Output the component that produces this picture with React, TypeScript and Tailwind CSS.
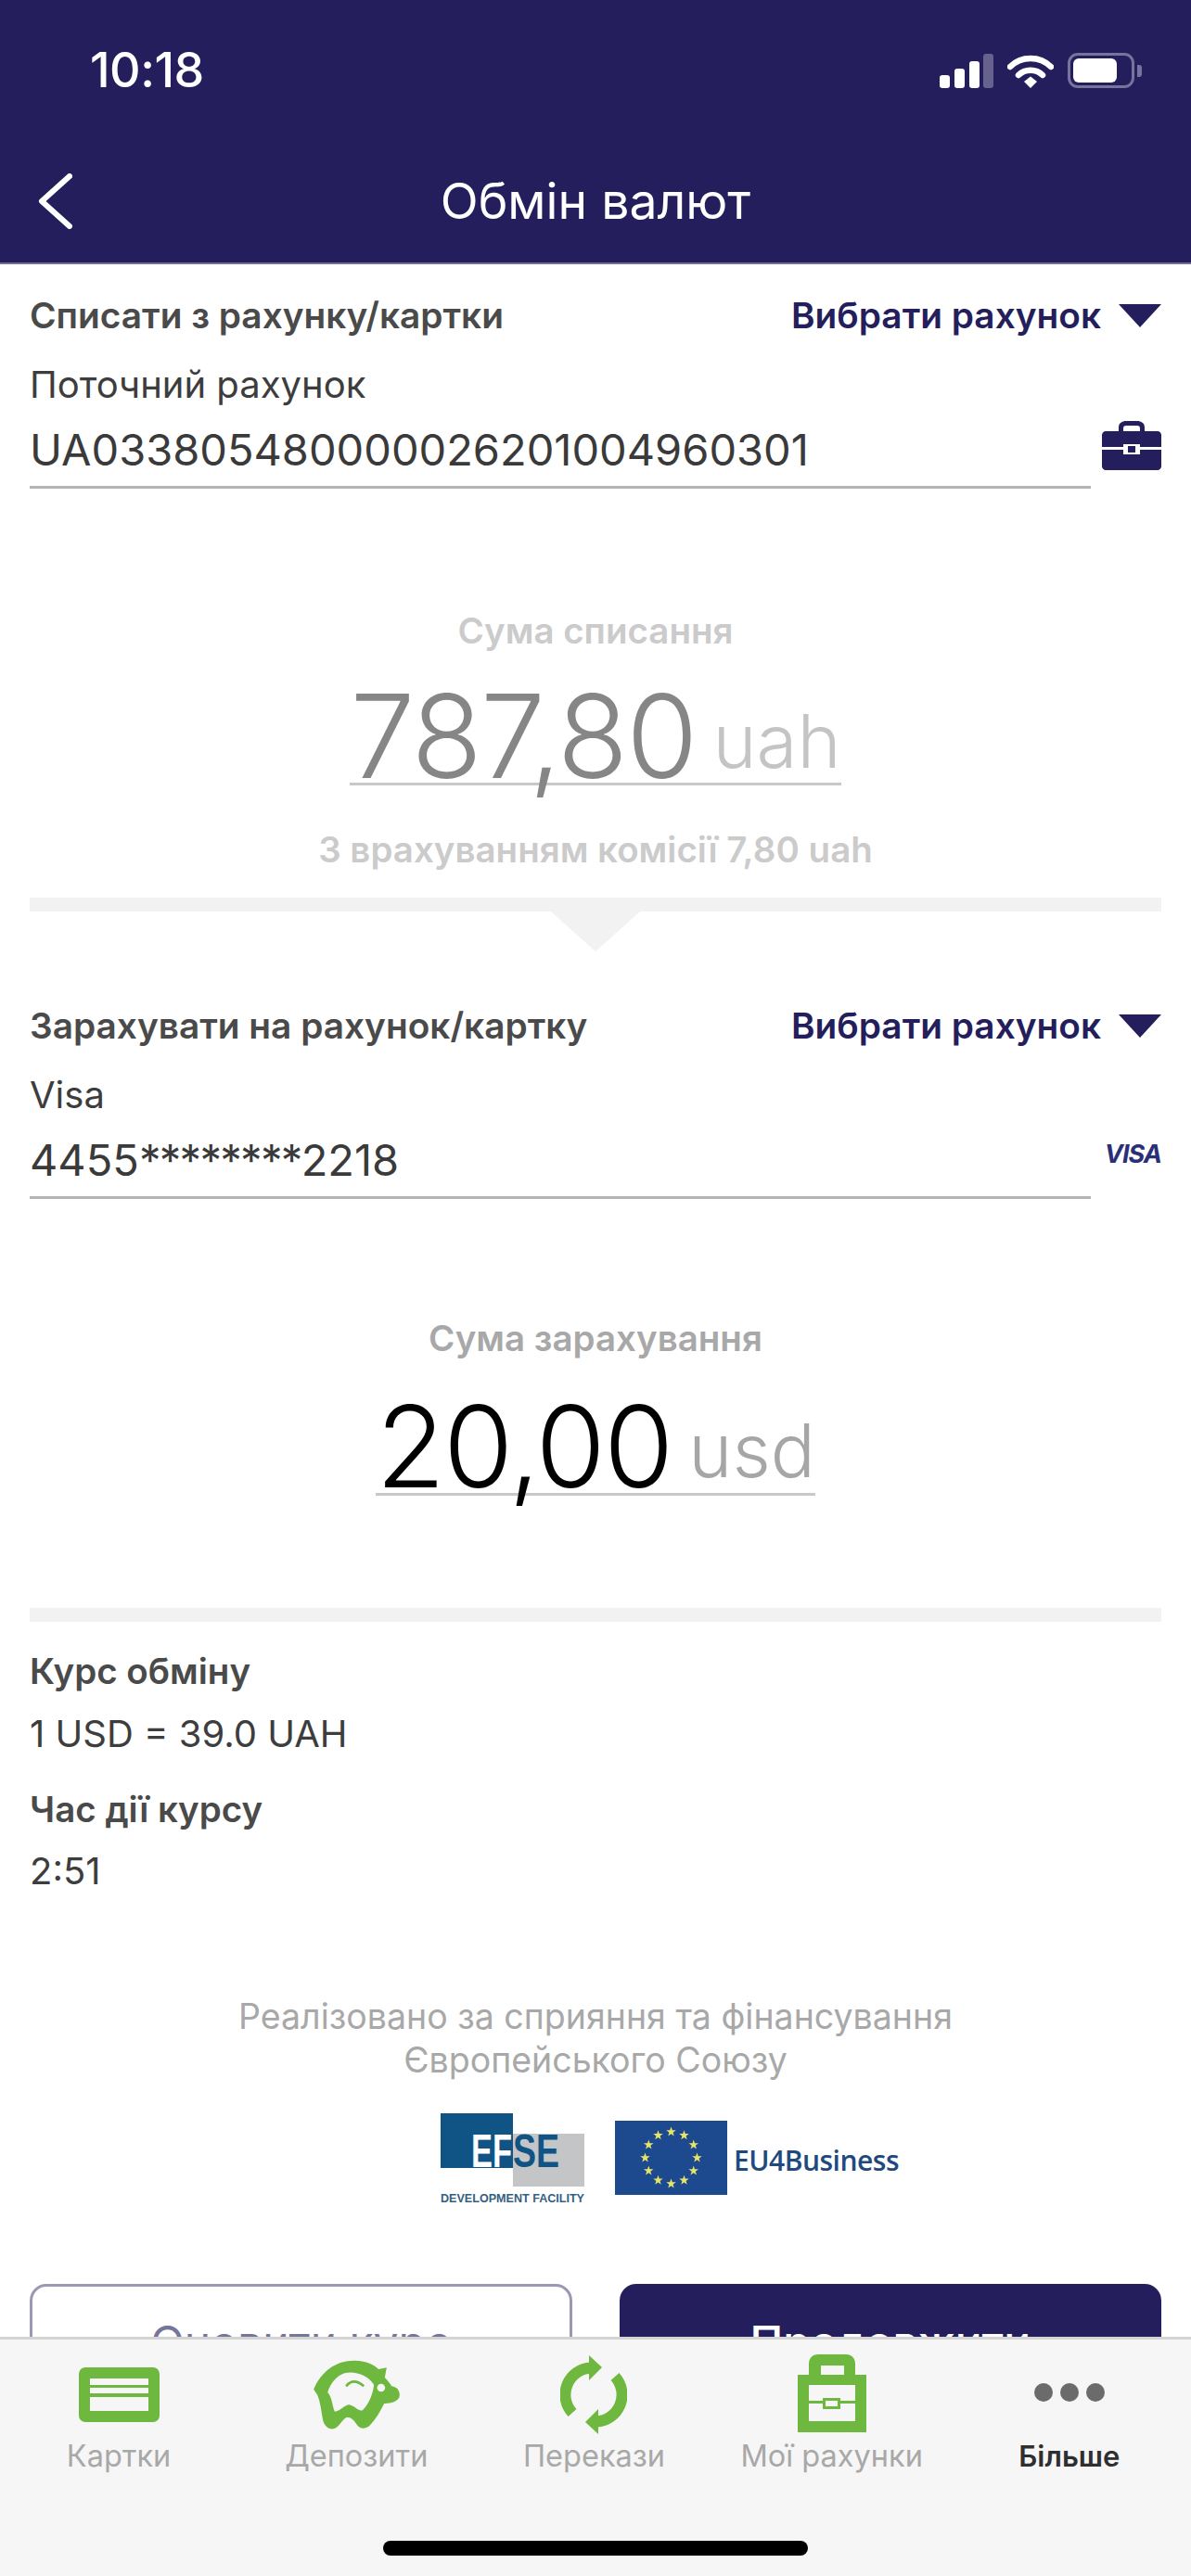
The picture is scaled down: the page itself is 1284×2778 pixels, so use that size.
import React from 'react';

const NAVY = '#241f5c';

function SignalIcon() {
  return (
    <svg width="58" height="37" viewBox="0 0 58 37" aria-hidden>
      <rect x="0" y="23" width="11" height="14" rx="3" fill="#fff" />
      <rect x="16" y="16" width="11" height="21" rx="3" fill="#fff" />
      <rect x="32" y="8" width="11" height="29" rx="3" fill="#fff" />
      <rect x="47" y="0" width="11" height="37" rx="3" fill="#fff" fillOpacity="0.3" />
    </svg>
  );
}

function WifiIcon() {
  return (
    <svg width="50" height="37" viewBox="0 0 50 37" fill="none" aria-hidden>
      <path d="M3 14 C15 2 35 2 47 14" stroke="#fff" strokeWidth="6.5" strokeLinecap="round" />
      <path d="M12 23 C19 16 31 16 38 23" stroke="#fff" strokeWidth="6.5" strokeLinecap="round" />
      <path d="M18 30 L25 24.5 L32 30 L25 37 Z" fill="#fff" />
    </svg>
  );
}

function BatteryIcon() {
  return (
    <div className="flex items-center gap-[3px]">
      <div className="w-[72px] h-[38px] rounded-[11px] border-[3px] border-[#77749c] p-[3px]">
        <div className="w-[47px] h-full rounded-[6px] bg-white" />
      </div>
      <div className="w-[5px] h-[13px] rounded-r-[3px] bg-[#77749c]" />
    </div>
  );
}

function SmallCase() {
  return (
    <svg width="64" height="53" viewBox="0 0 64 53" aria-hidden>
      <path fillRule="evenodd" d="M18 11 V7 C18 2 22 0 26 0 H38 C42 0 46 2 46 7 V11 H41 V8 C41 6 40 5 38 5 H26 C24 5 23 6 23 8 V11 Z" fill={NAVY} />
      <path d="M4 11 H60 C62 11 64 13 64 15 V28 H41 V25 H23 V28 H0 V15 C0 13 2 11 4 11 Z" fill={NAVY} />
      <path d="M0 31 H23 V36 H41 V31 H64 V49 C64 51 62 53 60 53 H4 C2 53 0 51 0 49 Z" fill={NAVY} />
      <rect x="28" y="27" width="8" height="7" fill={NAVY} />
    </svg>
  );
}

function Caret() {
  return (
    <svg width="46" height="25" viewBox="0 0 46 25" aria-hidden>
      <path d="M0 0 H46 L23 25 Z" fill={NAVY} />
    </svg>
  );
}

function SectionHead({ title }: { title: string }) {
  return (
    <div className="flex items-center justify-between h-[50px]">
      <span className="text-[38.8px] font-semibold text-[#4a4a4a]">{title}</span>
      <div className="flex items-center gap-[19px]">
        <span className="text-[38.8px] font-semibold text-[#241f5c]">Вибрати рахунок</span>
        <Caret />
      </div>
    </div>
  );
}

function AccountRow({ label, value, icon }: { label: string; value: React.ReactNode; icon: React.ReactNode }) {
  return (
    <div>
      <div className="mt-[25px] h-[50px] leading-[50px] text-[40px] text-[#3d3d3d]">{label}</div>
      <div className="flex items-start justify-between">
        <div className="w-[1144px] pt-[5px] leading-[79px] text-[47px] text-[#3a3a3a] border-b-[3px] border-[#b4b4b4]">
          {value}
        </div>
        <div className="pt-[14px]">{icon}</div>
      </div>
    </div>
  );
}

function Amount({ value, unit, valueClass, unitClass }: { value: string; unit: string; valueClass: string; unitClass: string }) {
  return (
    <div className="flex justify-center">
      <div className="flex items-baseline gap-[18px] h-[107px] leading-[107px] border-b-[3px] border-[#c8c8c8]">
        <span className={`font-[350] tracking-[-2px] ${valueClass}`}>{value}</span>
        <span className={`text-[80px] font-light -translate-y-[11px] ${unitClass}`}>{unit}</span>
      </div>
    </div>
  );
}

function CardTab() {
  return (
    <svg width="87" height="59" viewBox="0 0 87 59" aria-hidden>
      <rect width="87" height="59" rx="7" fill="#6fb83f" />
      <rect x="12" y="12" width="63" height="7" fill="#f6f6f6" />
      <rect x="12" y="22" width="63" height="6" fill="#f6f6f6" />
      <rect x="12" y="32" width="63" height="15" fill="#f6f6f6" />
    </svg>
  );
}

function PigTab() {
  return (
    <svg width="93" height="75" viewBox="900 95 278 225" aria-hidden>
      <path
        fillRule="evenodd"
        fill="#6fb83f"
        d="M900 190 C925 130 975 95 1035 97 C1070 98 1095 110 1110 125 L1136 120 L1130 152 C1140 162 1148 172 1152 180 C1170 182 1178 195 1178 208 C1178 224 1160 235 1128 236 C1115 262 1102 285 1085 303 C1072 320 1050 320 1040 305 C1032 290 1020 280 1008 280 C995 285 985 305 972 315 C955 325 935 312 930 290 C925 260 920 225 912 208 Z M945 200 C960 215 960 245 968 262 C985 262 1000 240 1015 240 C1035 245 1045 262 1058 258 C1075 240 1090 215 1095 175 C1075 145 1035 130 1000 138 C975 145 955 170 945 200 Z"
      />
      <circle cx="1118" cy="185" r="13" fill="#f6f6f6" />
      <path d="M1005 180 C1020 160 1040 160 1062 180" fill="none" stroke="#6fb83f" strokeWidth="8" />
    </svg>
  );
}

function RefreshTab() {
  return (
    <svg width="72" height="85" viewBox="0 0 72 85" aria-hidden>
      <g fill="#6fb83f">
        <path d="M13 62 A29 29 0 0 1 33 13.5" fill="none" stroke="#6fb83f" strokeWidth="12" />
        <path d="M31 0 L45 13 L31 27 Z" />
        <g transform="rotate(180 36 42.5)">
          <path d="M13 62 A29 29 0 0 1 33 13.5" fill="none" stroke="#6fb83f" strokeWidth="12" />
          <path d="M31 0 L45 13 L31 27 Z" />
        </g>
      </g>
    </svg>
  );
}

function CaseTab() {
  return (
    <svg width="74" height="84" viewBox="0 0 74 84" aria-hidden>
      <path
        fillRule="evenodd"
        fill="#6fb83f"
        d="M12 22 V10 C12 4 16 0 22 0 H52 C58 0 62 4 62 10 V22 H74 V84 H0 V22 Z M25 12 V22 H50 V12 Z M12 33 V50 H27 V47 H46 V50 H62 V33 Z M12 53 V72 H62 V53 H46 V59 H27 V53 Z M30 50 V56 H43 V50 Z"
      />
    </svg>
  );
}

const TABS = [
  { label: 'Картки', icon: <CardTab />, h: 'pt-[30px]' },
  { label: 'Депозити', icon: <PigTab />, h: 'pt-[22px]' },
  { label: 'Перекази', icon: <RefreshTab />, h: 'pt-[17px]' },
  { label: 'Мої рахунки', icon: <CaseTab />, h: 'pt-[16px]' },
];

function EfseLogo() {
  return (
    <svg width="155" height="100" viewBox="0 0 155 100" aria-hidden>
      <rect x="0" y="0" width="78" height="59" fill="#0f5485" />
      <rect x="78" y="22" width="77" height="57" fill="#c3c5c7" />
      <text x="33" y="58" fontFamily="'Liberation Sans', sans-serif" fontSize="50" fontWeight="700" fill="#fff" textLength="44" lengthAdjust="spacingAndGlyphs">
        EF
      </text>
      <text x="78" y="58" fontFamily="'Liberation Sans', sans-serif" fontSize="50" fontWeight="700" fill="#0f5485" textLength="50" lengthAdjust="spacingAndGlyphs">
        SE
      </text>
      <text x="0" y="96" fontFamily="'Liberation Sans', sans-serif" fontSize="12" fontWeight="700" fill="#355f7f" textLength="155" lengthAdjust="spacingAndGlyphs">
        DEVELOPMENT FACILITY
      </text>
    </svg>
  );
}

function EuFlag() {
  const stars = Array.from({ length: 12 }, (_, i) => {
    const a = (i * Math.PI) / 6;
    const cx = 60.5 + 28 * Math.sin(a);
    const cy = 40 - 28 * Math.cos(a);
    const pts = Array.from({ length: 10 }, (_, k) => {
      const r = k % 2 === 0 ? 5.5 : 2.2;
      const b = (k * Math.PI) / 5;
      return `${(cx + r * Math.sin(b)).toFixed(1)},${(cy - r * Math.cos(b)).toFixed(1)}`;
    }).join(' ');
    return <polygon key={i} points={pts} fill="#e8e36a" />;
  });
  return (
    <svg width="121" height="80" viewBox="0 0 121 80" aria-hidden>
      <rect width="121" height="80" fill="#1d4a8f" />
      {stars}
    </svg>
  );
}

export default function App() {
  return (
    <div className="w-[1284px] h-[2778px] flex flex-col overflow-hidden bg-white font-['Inter',sans-serif]">
      <header className="h-[285px] shrink-0 bg-[#241f5c] border-b-[2px] border-[#6f6c98] text-white">
        <div className="h-[152px] flex items-center justify-between pl-[97px] pr-[53px]">
          <span className="text-[52px] font-medium tracking-[-0.5px]">10:18</span>
          <div className="flex items-center gap-[15px]">
            <SignalIcon />
            <WifiIcon />
            <BatteryIcon />
          </div>
        </div>
        <div className="h-[130px] relative flex items-center justify-center">
          <svg className="absolute left-[40px] top-[35px]" width="38" height="60" viewBox="0 0 38 60" fill="none" aria-hidden>
            <path d="M35 3 L5 30 L35 57" stroke="#fff" strokeWidth="6" strokeLinecap="round" strokeLinejoin="round" />
          </svg>
          <span className="text-[53.5px] font-normal">Обмін валют</span>
        </div>
      </header>

      <main className="flex-1 min-h-0 overflow-hidden px-[32px]">
        <div className="pt-[30px]">
          <SectionHead title="Списати з рахунку/картки" />
          <AccountRow label="Поточний рахунок" value="UA033805480000026201004960301" icon={<SmallCase />} />
        </div>

        <div className="mt-[128px] h-[50px] leading-[50px] text-center text-[38.5px] font-semibold text-[#cbcbcb]">Сума списання</div>
        <div className="mt-[35px]">
          <Amount value="787,80" unit="uah" valueClass="text-[125px] text-[#868686]" unitClass="text-[#c4c4c4]" />
        </div>
        <div className="mt-[44px] h-[50px] leading-[50px] text-center text-[38.5px] font-semibold text-[#cbcbcb]">З врахуванням комісії 7,80 uah</div>

        <div className="mt-[27px] h-[15px] bg-[#f2f2f2]" />
        <div className="flex justify-center">
          <div className="w-0 h-0 border-x-[48px] border-x-transparent border-t-[43px] border-t-[#f2f2f2]" />
        </div>

        <div className="mt-[55px]">
          <SectionHead title="Зарахувати на рахунок/картку" />
          <AccountRow
            label="Visa"
            value={<>4455<span className="tracking-[-1.7px]">********</span>2218</>}
            icon={<span className="block text-right text-[27px] font-bold italic leading-[50px] tracking-[-1px] text-[#2b2f77] w-[64px]">VISA</span>}
          />
        </div>

        <div className="mt-[125px] h-[50px] leading-[50px] text-center text-[38.5px] font-semibold text-[#a8a8a8]">Сума зарахування</div>
        <div className="mt-[38px]">
          <Amount value="20,00" unit="usd" valueClass="text-[122px] text-black" unitClass="text-[#a6a6a6]" />
        </div>

        <div className="mt-[121px] h-[15px] bg-[#f2f2f2]" />

        <div className="mt-[28px] h-[50px] leading-[50px] text-[38.5px] font-semibold text-[#4a4a4a]">Курс обміну</div>
        <div className="mt-[18px] h-[50px] leading-[50px] text-[40px] text-[#3d3d3d]">1 USD = 39.0 UAH</div>
        <div className="mt-[31px] h-[50px] leading-[50px] text-[38.5px] font-semibold text-[#4a4a4a]">Час дії курсу</div>
        <div className="mt-[17px] h-[50px] leading-[50px] text-[40px] text-[#3d3d3d]">2:51</div>

        <div className="mt-[108px] text-center text-[37.5px] leading-[47px] text-[#a8a8a8]">
          <div>Реалізовано за сприяння та фінансування</div>
          <div>Європейського Союзу</div>
        </div>

        <div className="mt-[34px] flex items-start justify-center gap-[33px] h-[100px] pl-[160px]">
          <EfseLogo />
          <div className="flex items-center gap-[7px] mt-[8px]">
            <EuFlag />
            <span className="text-[30px] text-[#1f4a80] font-['Open_Sans',sans-serif] font-semibold tracking-[-0.5px] mt-[4px]">EU4Business</span>
          </div>
        </div>

        <div className="mt-[84px] grid grid-cols-2 gap-[51px]">
          <button className="h-[126px] rounded-[18px] border-[3px] border-[#9a98b2] bg-white text-[48px] text-[#77759a]">Оновити курс</button>
          <button className="h-[126px] rounded-[18px] bg-[#241f5c] text-[48px] font-medium text-white">Продовжити</button>
        </div>
      </main>

      <footer className="h-[258px] shrink-0 bg-[#f6f6f6] border-t-[3px] border-[#d4d4d4]">
        <nav className="grid grid-cols-5 h-[155px] pr-[3px]">
          {TABS.map((t) => (
            <div key={t.label} className="flex flex-col items-center">
              <div className={`h-[105px] flex items-start ${t.h}`}>{t.icon}</div>
              <span className="mt-[-1px] text-[32.5px] leading-[44px] text-[#a8a8a8] whitespace-nowrap">{t.label}</span>
            </div>
          ))}
          <div className="flex flex-col items-center">
            <div className="h-[105px] pt-[47px] flex items-start gap-[8px]">
              <span className="w-[20px] h-[20px] rounded-full bg-[#6b6b6b]" />
              <span className="w-[20px] h-[20px] rounded-full bg-[#6b6b6b]" />
              <span className="w-[20px] h-[20px] rounded-full bg-[#6b6b6b]" />
            </div>
            <span className="mt-[-1px] text-[31px] leading-[44px] font-semibold text-[#2f2f2f]">Більше</span>
          </div>
        </nav>
        <div className="mt-[62px] flex justify-center">
          <div className="w-[458px] h-[16px] rounded-full bg-black" />
        </div>
      </footer>
    </div>
  );
}
